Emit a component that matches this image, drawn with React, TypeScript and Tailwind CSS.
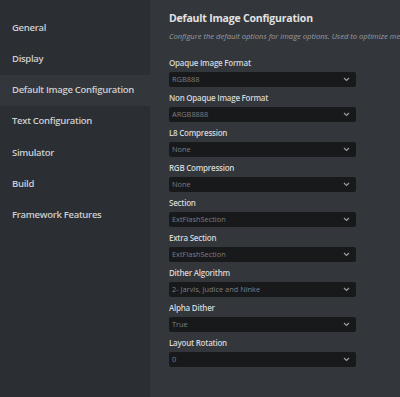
import React from "react";

const navItems = [
  "General",
  "Display",
  "Default Image Configuration",
  "Text Configuration",
  "Simulator",
  "Build",
  "Framework Features",
];

const fields = [
  { label: "Opaque Image Format", value: "RGB888" },
  { label: "Non Opaque Image Format", value: "ARGB8888" },
  { label: "L8 Compression", value: "None" },
  { label: "RGB Compression", value: "None" },
  { label: "Section", value: "ExtFlashSection" },
  { label: "Extra Section", value: "ExtFlashSection" },
  { label: "Dither Algorithm", value: "2- Jarvis, Judice and Ninke" },
  { label: "Alpha Dither", value: "True" },
  { label: "Layout Rotation", value: "0" },
];

const Chevron = () => (
  <svg width="7" height="5" viewBox="0 0 7 5" fill="none">
    <path d="M1 1 L3.5 3.5 L6 1" stroke="#9a9ca0" strokeWidth="1.2" />
  </svg>
);

const App = () => {
  return (
    <div
      className="w-[400px] h-[397px] flex overflow-hidden bg-[#33363a]"
      style={{ fontFamily: "'Open Sans', sans-serif" }}
    >
      <div className="w-[150px] shrink-0 bg-[#2b2e32] pt-[12px] flex flex-col">
        {navItems.map((item) => (
          <div
            key={item}
            className={
              "h-[31.3px] flex items-center px-3 text-[9.5px] tracking-[-0.3px] font-semibold text-[#cbcdd0] whitespace-nowrap " +
              (item === "Default Image Configuration" ? "bg-[#33363a]" : "")
            }
          >
            {item}
          </div>
        ))}
      </div>
      <div className="flex-1 pl-[19px] pt-[9px] overflow-hidden">
        <h1 className="text-[10.5px] tracking-[-0.2px] font-bold text-[#e2e3e4] whitespace-nowrap leading-[18px]">
          Default Image Configuration
        </h1>
        <p className="text-[7.6px] italic text-[#9a9da1] whitespace-nowrap mt-[3px] leading-[12px]">
          Configure the default options for image options. Used to optimize memory usage
        </p>
        <div className="flex flex-col mt-[14px]">
          {fields.map((f) => (
            <div key={f.label} className="flex flex-col h-[35px]">
              <div className="text-[8px] tracking-[-0.25px] font-semibold text-[#d3d5d7] leading-[14px] whitespace-nowrap">
                {f.label}
              </div>
              <div className="w-[187px] h-[15px] mt-[2px] rounded-[2px] bg-[#18191b] flex items-center justify-between pl-[3px] pr-[6px]">
                <span className="text-[7.4px] text-[#7c7f83] leading-none whitespace-nowrap">
                  {f.value}
                </span>
                <Chevron />
              </div>
            </div>
          ))}
        </div>
      </div>
    </div>
  );
};

export default App;
